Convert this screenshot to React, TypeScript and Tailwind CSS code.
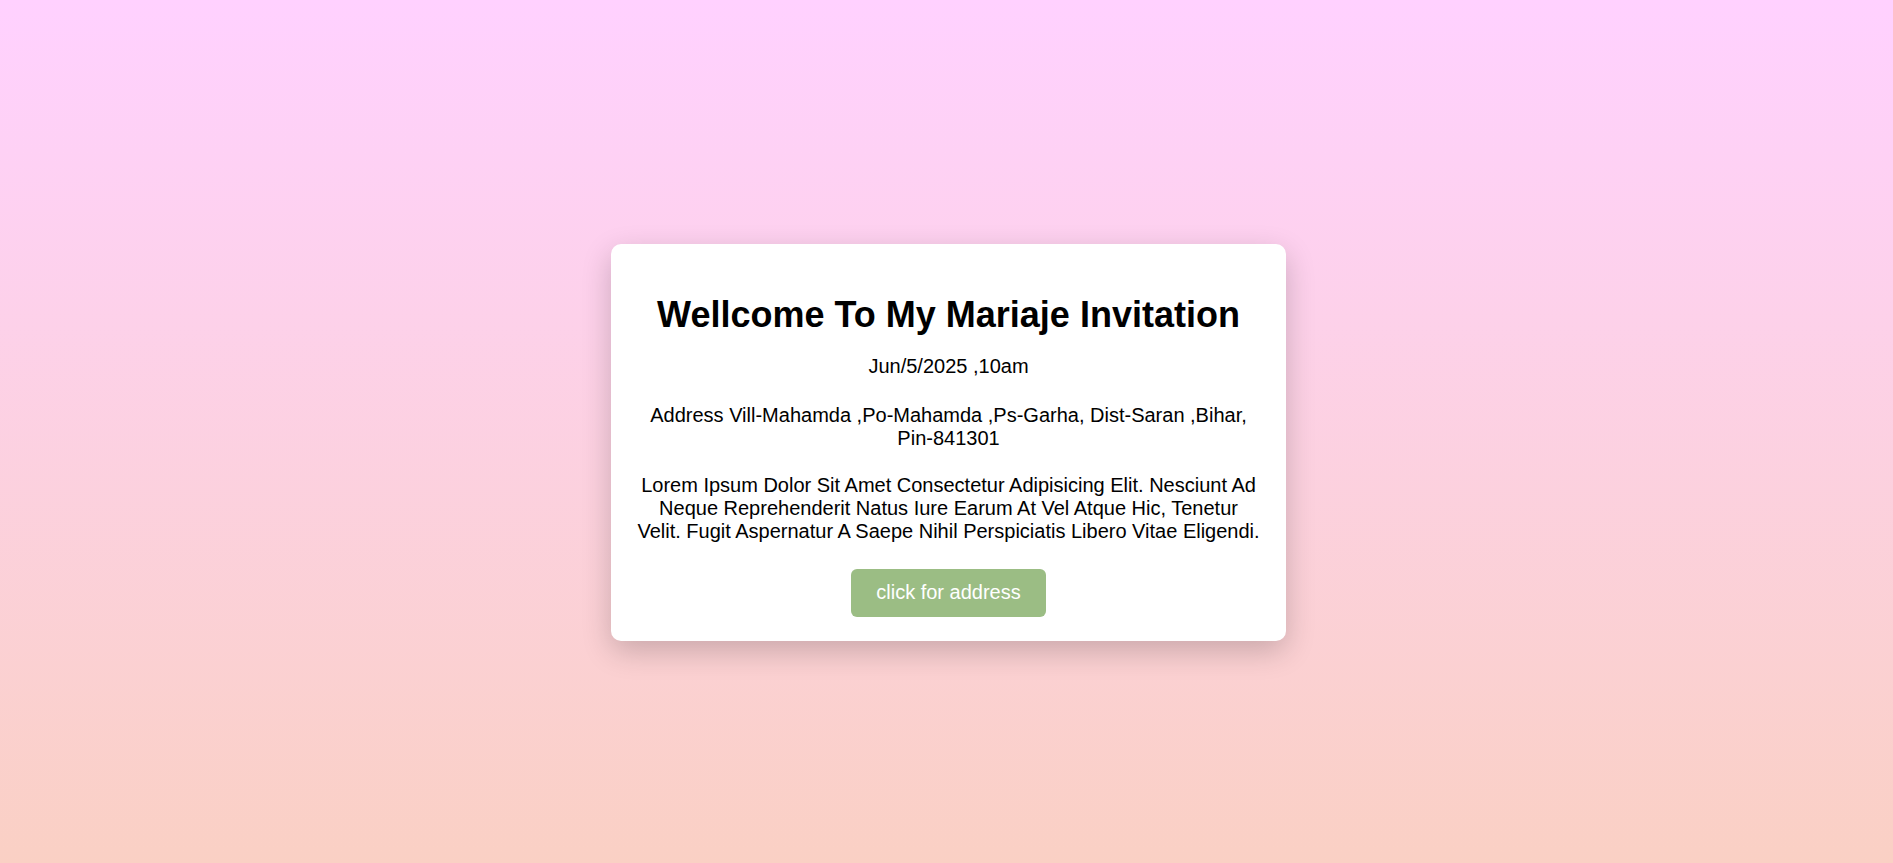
export default function App() {
  return (
    <main className="flex min-h-screen items-center justify-center bg-gradient-to-b from-[#ffd1ff] to-[#fad0c4] pt-[21px] pl-[4px] font-['Liberation_Sans',Arial,sans-serif] text-black">
      <section className="w-[675px] rounded-[10px] bg-white px-[25px] pt-[50px] pb-[24px] text-center shadow-[0_10px_30px_rgba(0,0,0,0.2)]">
        <h1 className="text-[36px] leading-[41px] font-bold">Wellcome To My Mariaje Invitation</h1>
        <p className="mt-[20px] text-[20px] leading-[23px]">Jun/5/2025 ,10am</p>
        <p className="mt-[26px] text-[20px] leading-[23px]">
          Address Vill-Mahamda ,Po-Mahamda ,Ps-Garha, Dist-Saran ,Bihar, Pin-841301
        </p>
        <p className="mt-[24px] text-[20px] leading-[23px]">
          Lorem Ipsum Dolor Sit Amet Consectetur Adipisicing Elit. Nesciunt Ad Neque Reprehenderit Natus Iure Earum At Vel Atque Hic, Tenetur Velit. Fugit Aspernatur A Saepe Nihil Perspiciatis Libero Vitae Eligendi.
        </p>
        <button className="mt-[26px] h-[48px] rounded-[6px] bg-[#9bbd84] px-[25px] text-[20px] leading-[23px] text-white">
          click for address
        </button>
      </section>
    </main>
  )
}
